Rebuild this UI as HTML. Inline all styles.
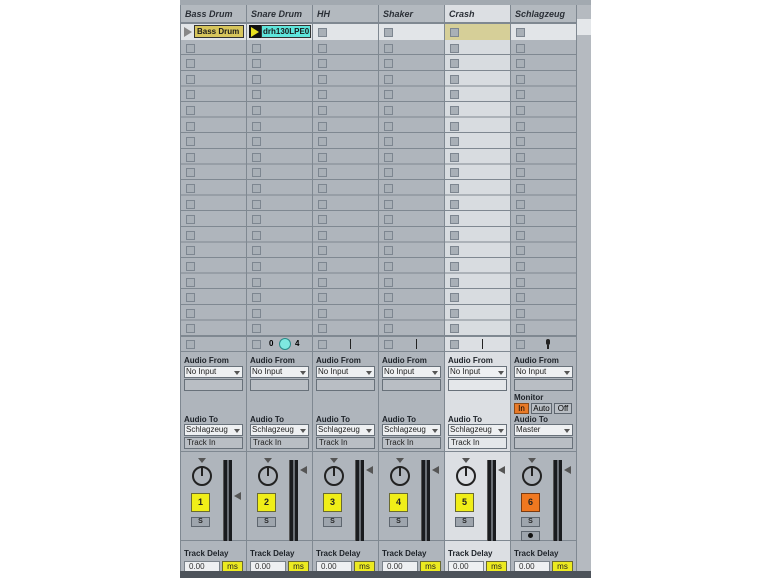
<!DOCTYPE html>
<html><head><meta charset="utf-8"><style>
*{margin:0;padding:0;box-sizing:border-box}
body{width:770px;height:578px;background:#fff;position:relative;overflow:hidden;font-family:"Liberation Sans",sans-serif;}
#panel{position:absolute;left:180px;top:0;width:411px;height:578px;background:#7f8891}
.topbar{position:absolute;left:0;top:0;width:411px;height:5px;background:#a2a9b0}
.bot{position:absolute;left:0;top:571px;width:411px;height:7px;background:#4d535a}
.col{position:absolute;top:5px;width:65px;height:566px}
.col>div{position:absolute;left:0;width:65px}
.hd{top:0;height:17px;background:#b3b9bf;font:italic bold 9px "Liberation Sans",sans-serif;color:#2a2f36;padding:4px 0 0 4px}
.rows{top:19px;height:312px;background:repeating-linear-gradient(#afb5bc 0 14.6px,#7f8891 14.6px 15.6px)}
.rows i{display:block;height:15.6px;position:relative}
.rows i:after{content:"";position:absolute;left:5px;top:4px;width:7px;height:7px;border:1px solid #7d8690;background:#a9b0b7}
.rows i.nc:after{display:none}
.lt .rows{background:repeating-linear-gradient(#d8dce0 0 14.6px,#7f8891 14.6px 15.6px)}
.lt .hd,.lt .st,.lt .mx,.lt .td{background:#dcdfe3}
.st{top:332px;height:14px;background:#afb5bc}
.st:after{content:"";position:absolute;left:5px;top:3px;width:7px;height:7px;border:1px solid #7d8690;background:#a9b0b7}
.mx{top:347px;height:99px;background:#afb5bc}
.kn{top:447px;height:88px;background:#afb5bc}
.td{top:536px;height:30px;background:#afb5bc}
.lbl{position:absolute;left:3px;font:bold 8px "Liberation Sans",sans-serif;color:#1d2228}
.dd{position:absolute;left:3px;width:59px;height:12px;background:#eef0f2;border:1px solid #68717a;font:8px "Liberation Sans",sans-serif;color:#222;padding-left:1px;line-height:10px}
.dd b{position:absolute;right:2px;top:4px;width:0;height:0;border-left:3px solid transparent;border-right:3px solid transparent;border-top:4px solid #555}
.bx{position:absolute;left:3px;width:59px;height:12px;background:#b9bec4;border:1px solid #68717a;font:8px "Liberation Sans",sans-serif;color:#222;padding-left:2px;line-height:10px}
.knob{position:absolute;left:11px;top:14px;width:20px;height:20px;border:2px solid #222;border-radius:50%}
.knob:after{content:"";position:absolute;left:7px;top:-2px;width:2px;height:10px;background:#222}
.ktri{position:absolute;left:17px;top:6px;border-left:4px solid transparent;border-right:4px solid transparent;border-top:5px solid #555}
.num{position:absolute;left:10px;top:41px;width:19px;height:19px;background:#f0ee18;border:1px solid #6a6a30;font:bold 9px "Liberation Sans",sans-serif;text-align:center;line-height:17px;color:#222}
.s{position:absolute;left:10px;top:65px;width:19px;height:10px;background:#9ea5ad;border:1px solid #5e666f;font:bold 7px "Liberation Sans",sans-serif;text-align:center;line-height:8px;color:#222}
.met{position:absolute;left:42px;top:8px;width:9px;height:82px;background:#1a1c1f;border-left:1px solid #555}
.met:after{content:"";position:absolute;left:3px;top:0;width:2px;height:82px;background:#6a6f75}
.mtri{position:absolute;left:53px;width:0;height:0;border-top:4px solid transparent;border-bottom:4px solid transparent;border-right:7px solid #555}
.fld{position:absolute;left:3px;top:20px;width:36px;height:11px;background:#eef0f2;border:1px solid #7a828a;font:8px "Liberation Sans",sans-serif;color:#333;padding-left:4px;line-height:9px}
.ms{position:absolute;left:41px;top:20px;width:21px;height:11px;background:#ecea20;border:1px solid #6a6a30;font:8px "Liberation Sans",sans-serif;text-align:center;line-height:9px;color:#222}
.clip{position:absolute;top:1px;height:13px;font:bold 8px "Liberation Sans",sans-serif;line-height:11px;color:#1a1a1a;border:1px solid #333}
</style></head><body>
<div id="panel">
<div class="topbar"></div>
<div style="position:absolute;left:397px;top:5px;width:14px;height:566px;background:#b5bac0"></div>
<div style="position:absolute;left:397px;top:19px;width:14px;height:16px;background:#e4e7ea"></div>

<!-- col1 -->
<div class="col" style="left:1px">
<div class="hd">Bass Drum</div>
<div class="rows"><i class="nc" style="background:#e2e5e8"><span style="position:absolute;left:3px;top:3px;width:0;height:0;border-top:5px solid transparent;border-bottom:5px solid transparent;border-left:8px solid #888"></span><span class="clip" style="left:13px;width:50px;background:#d8c65c;padding-left:2px">Bass Drum</span></i><i></i><i></i><i></i><i></i><i></i><i></i><i></i><i></i><i></i><i></i><i></i><i></i><i></i><i></i><i></i><i></i><i></i><i></i><i></i></div>
<div class="st"></div>
<div class="mx"><div class="lbl" style="top:4px">Audio From</div><div class="dd" style="top:14px">No Input<b></b></div><div class="bx" style="top:27px"></div><div class="lbl" style="top:63px">Audio To</div><div class="dd" style="top:72px">Schlagzeug<b></b></div><div class="bx" style="top:85px">Track In</div></div>
<div class="kn"><div class="ktri"></div><div class="knob"></div><div class="num">1</div><div class="s">S</div><div class="met"></div><div class="mtri" style="top:40px"></div></div>
<div class="td"><div class="lbl" style="top:8px">Track Delay</div><div class="fld">0.00</div><div class="ms">ms</div></div>
</div>

<!-- col2 -->
<div class="col" style="left:67px">
<div class="hd">Snare Drum</div>
<div class="rows"><i class="nc" style="background:#e2e5e8"><span style="position:absolute;left:2px;top:1px;width:12px;height:13px;background:#111"></span><span style="position:absolute;left:4px;top:3px;width:0;height:0;border-top:5px solid transparent;border-bottom:5px solid transparent;border-left:8px solid #e8e020"></span><span class="clip" style="left:14px;width:50px;background:#5fe6dc;padding-left:1px;overflow:hidden;white-space:nowrap">drh130LPE0</span></i><i></i><i></i><i></i><i></i><i></i><i></i><i></i><i></i><i></i><i></i><i></i><i></i><i></i><i></i><i></i><i></i><i></i><i></i><i></i></div>
<div class="st"><span style="position:absolute;left:22px;top:2px;font:bold 8px 'Liberation Sans',sans-serif">0</span><span style="position:absolute;left:32px;top:1px;width:12px;height:12px;border-radius:50%;background:#7ee8e0;border:1px solid #2a8a88"></span><span style="position:absolute;left:48px;top:2px;font:bold 8px 'Liberation Sans',sans-serif">4</span></div>
<div class="mx"><div class="lbl" style="top:4px">Audio From</div><div class="dd" style="top:14px">No Input<b></b></div><div class="bx" style="top:27px"></div><div class="lbl" style="top:63px">Audio To</div><div class="dd" style="top:72px">Schlagzeug<b></b></div><div class="bx" style="top:85px">Track In</div></div>
<div class="kn"><div class="ktri"></div><div class="knob"></div><div class="num">2</div><div class="s">S</div><div class="met"></div><div class="mtri" style="top:14px"></div></div>
<div class="td"><div class="lbl" style="top:8px">Track Delay</div><div class="fld">0.00</div><div class="ms">ms</div></div>
</div>

<!-- col3 -->
<div class="col" style="left:133px">
<div class="hd">HH</div>
<div class="rows"><i style="background:#e2e5e8"></i><i></i><i></i><i></i><i></i><i></i><i></i><i></i><i></i><i></i><i></i><i></i><i></i><i></i><i></i><i></i><i></i><i></i><i></i><i></i></div>
<div class="st"><span style="position:absolute;left:37px;top:2px;width:1px;height:10px;background:#222"></span></div>
<div class="mx"><div class="lbl" style="top:4px">Audio From</div><div class="dd" style="top:14px">No Input<b></b></div><div class="bx" style="top:27px"></div><div class="lbl" style="top:63px">Audio To</div><div class="dd" style="top:72px">Schlagzeug<b></b></div><div class="bx" style="top:85px">Track In</div></div>
<div class="kn"><div class="ktri"></div><div class="knob"></div><div class="num">3</div><div class="s">S</div><div class="met"></div><div class="mtri" style="top:14px"></div></div>
<div class="td"><div class="lbl" style="top:8px">Track Delay</div><div class="fld">0.00</div><div class="ms">ms</div></div>
</div>

<!-- col4 -->
<div class="col" style="left:199px">
<div class="hd">Shaker</div>
<div class="rows"><i style="background:#e2e5e8"></i><i></i><i></i><i></i><i></i><i></i><i></i><i></i><i></i><i></i><i></i><i></i><i></i><i></i><i></i><i></i><i></i><i></i><i></i><i></i></div>
<div class="st"><span style="position:absolute;left:37px;top:2px;width:1px;height:10px;background:#222"></span></div>
<div class="mx"><div class="lbl" style="top:4px">Audio From</div><div class="dd" style="top:14px">No Input<b></b></div><div class="bx" style="top:27px"></div><div class="lbl" style="top:63px">Audio To</div><div class="dd" style="top:72px">Schlagzeug<b></b></div><div class="bx" style="top:85px">Track In</div></div>
<div class="kn"><div class="ktri"></div><div class="knob"></div><div class="num">4</div><div class="s">S</div><div class="met"></div><div class="mtri" style="top:14px"></div></div>
<div class="td"><div class="lbl" style="top:8px">Track Delay</div><div class="fld">0.00</div><div class="ms">ms</div></div>
</div>

<!-- col5 -->
<div class="col lt" style="left:265px">
<div class="hd">Crash</div>
<div class="rows"><i style="background:#d6cf98"></i><i></i><i></i><i></i><i></i><i></i><i></i><i></i><i></i><i></i><i></i><i></i><i></i><i></i><i></i><i></i><i></i><i></i><i></i><i></i></div>
<div class="st"><span style="position:absolute;left:37px;top:2px;width:1px;height:10px;background:#222"></span></div>
<div class="mx"><div class="lbl" style="top:4px">Audio From</div><div class="dd" style="top:14px">No Input<b></b></div><div class="bx" style="top:27px;background:#e4e7ea"></div><div class="lbl" style="top:63px">Audio To</div><div class="dd" style="top:72px">Schlagzeug<b></b></div><div class="bx" style="top:85px;background:#e4e7ea">Track In</div></div>
<div class="kn" style="background:#dcdfe3"><div class="ktri"></div><div class="knob"></div><div class="num">5</div><div class="s">S</div><div class="met"></div><div class="mtri" style="top:14px"></div></div>
<div class="td"><div class="lbl" style="top:8px">Track Delay</div><div class="fld">0.00</div><div class="ms">ms</div></div>
</div>

<!-- col6 -->
<div class="col" style="left:331px">
<div class="hd">Schlagzeug</div>
<div class="rows"><i style="background:#e2e5e8"></i><i></i><i></i><i></i><i></i><i></i><i></i><i></i><i></i><i></i><i></i><i></i><i></i><i></i><i></i><i></i><i></i><i></i><i></i><i></i></div>
<div class="st"><span style="position:absolute;left:35px;top:2px;width:4px;height:6px;border-radius:2px;background:#222"></span><span style="position:absolute;left:36px;top:8px;width:2px;height:4px;background:#222"></span></div>
<div class="mx"><div class="lbl" style="top:4px">Audio From</div><div class="dd" style="top:14px">No Input<b></b></div><div class="bx" style="top:27px"></div>
<div class="lbl" style="top:41px">Monitor</div>
<div style="position:absolute;left:3px;top:51px;width:15px;height:11px;background:#e87a28;border:1px solid #8a4a18;font:8px 'Liberation Sans',sans-serif;line-height:9px;text-align:center">In</div>
<div style="position:absolute;left:20px;top:51px;width:21px;height:11px;background:#b9bec4;border:1px solid #5e666f;font:8px 'Liberation Sans',sans-serif;line-height:9px;text-align:center">Auto</div>
<div style="position:absolute;left:43px;top:51px;width:18px;height:11px;background:#b9bec4;border:1px solid #5e666f;font:8px 'Liberation Sans',sans-serif;line-height:9px;text-align:center">Off</div>
<div class="lbl" style="top:63px">Audio To</div><div class="dd" style="top:72px">Master<b></b></div><div class="bx" style="top:85px"></div></div>
<div class="kn"><div class="ktri"></div><div class="knob"></div><div class="num" style="background:#f07820;border-color:#7a3a10">6</div><div class="s">S</div><div class="s" style="top:79px"><span style="display:inline-block;width:5px;height:5px;border-radius:50%;background:#111;margin-top:1px"></span></div><div class="met"></div><div class="mtri" style="top:14px"></div></div>
<div class="td"><div class="lbl" style="top:8px">Track Delay</div><div class="fld">0.00</div><div class="ms">ms</div></div>
</div>

<div class="bot"></div>
</div>
</body></html>
